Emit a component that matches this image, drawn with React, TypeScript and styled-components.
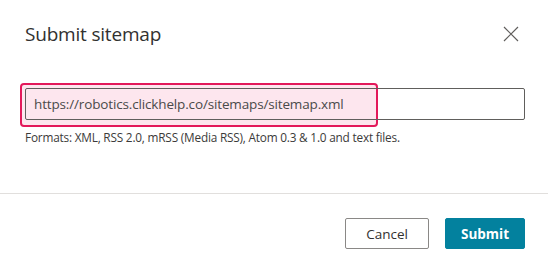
import React from 'react';
import styled, { createGlobalStyle } from 'styled-components';

const GlobalStyle = createGlobalStyle`
  html, body {
    margin: 0;
    padding: 0;
    background: #ffffff;
  }
  body {
    font-family: "Open Sans", "Noto Sans", sans-serif;
  }
`;

const Dialog = styled.div`
  width: 548px;
  height: 262px;
  background: #ffffff;
  display: flex;
  flex-direction: column;
  box-sizing: border-box;
`;

const Header = styled.div`
  display: flex;
  align-items: center;
  justify-content: space-between;
  padding: 20px 28px 0 25px;
  height: 27px;
`;

const Title = styled.h1`
  margin: 0;
  font-size: 19px;
  font-weight: 400;
  color: #323130;
  letter-spacing: -0.2px;
`;

const CloseButton = styled.button`
  width: 18px;
  height: 18px;
  padding: 0;
  border: none;
  background: none;
  display: flex;
  align-items: center;
  justify-content: center;
  cursor: pointer;
`;

const Body = styled.div`
  padding: 41px 23px 0 25px;
  height: 105px;
`;

const Field = styled.div`
  position: relative;
`;

const Input = styled.input`
  box-sizing: border-box;
  width: 500px;
  height: 32px;
  padding: 0 8px;
  border: 1px solid #605e5c;
  border-radius: 2px;
  background: transparent;
  font-family: "Open Sans", "Noto Sans", sans-serif;
  font-size: 13.5px;
  color: #4a4a4a;
  letter-spacing: -0.15px;
  outline: none;
  position: relative;
  z-index: 1;
`;

const Highlight = styled.div`
  position: absolute;
  left: -5px;
  top: -5px;
  width: 358px;
  height: 44px;
  box-sizing: border-box;
  border: 2px solid #e3185a;
  border-radius: 4px;
  background: #fde6ee;
`;

const Hint = styled.div`
  margin-top: 9px;
  font-size: 11.8px;
  color: #3b3a39;
  letter-spacing: -0.2px;
`;

const Divider = styled.div`
  height: 1px;
  background: #e1dfdd;
`;

const Footer = styled.div`
  display: flex;
  justify-content: flex-end;
  gap: 16px;
  padding: 24px 23px 0 0;
`;

const Button = styled.button<{ $primary?: boolean }>`
  box-sizing: border-box;
  height: 31px;
  padding: 0;
  border-radius: 2px;
  font-family: "Open Sans", "Noto Sans", sans-serif;
  font-size: 13.5px;
  cursor: pointer;
  ${p => p.$primary ? `
    width: 80px;
    background: #03819e;
    border: 1px solid #03819e;
    color: #ffffff;
    font-weight: 700;
  ` : `
    width: 84px;
    background: #ffffff;
    border: 1px solid #8a8886;
    color: #323130;
    font-weight: 400;
  `}
`;

const App: React.FC = () => {
  return (
    <>
      <GlobalStyle />
      <Dialog>
        <Header>
          <Title>Submit sitemap</Title>
          <CloseButton aria-label="Close">
            <svg width="16" height="16" viewBox="0 0 16 16">
              <path d="M1 1 L15 15 M15 1 L1 15" stroke="#605e5c" strokeWidth="1.2" fill="none" />
            </svg>
          </CloseButton>
        </Header>
        <Body>
          <Field>
            <Highlight />
            <Input defaultValue="https://robotics.clickhelp.co/sitemaps/sitemap.xml" />
          </Field>
          <Hint>Formats: XML, RSS 2.0, mRSS (Media RSS), Atom 0.3 &amp; 1.0 and text files.</Hint>
        </Body>
        <Divider />
        <Footer>
          <Button>Cancel</Button>
          <Button $primary>Submit</Button>
        </Footer>
      </Dialog>
    </>
  );
};

export default App;
